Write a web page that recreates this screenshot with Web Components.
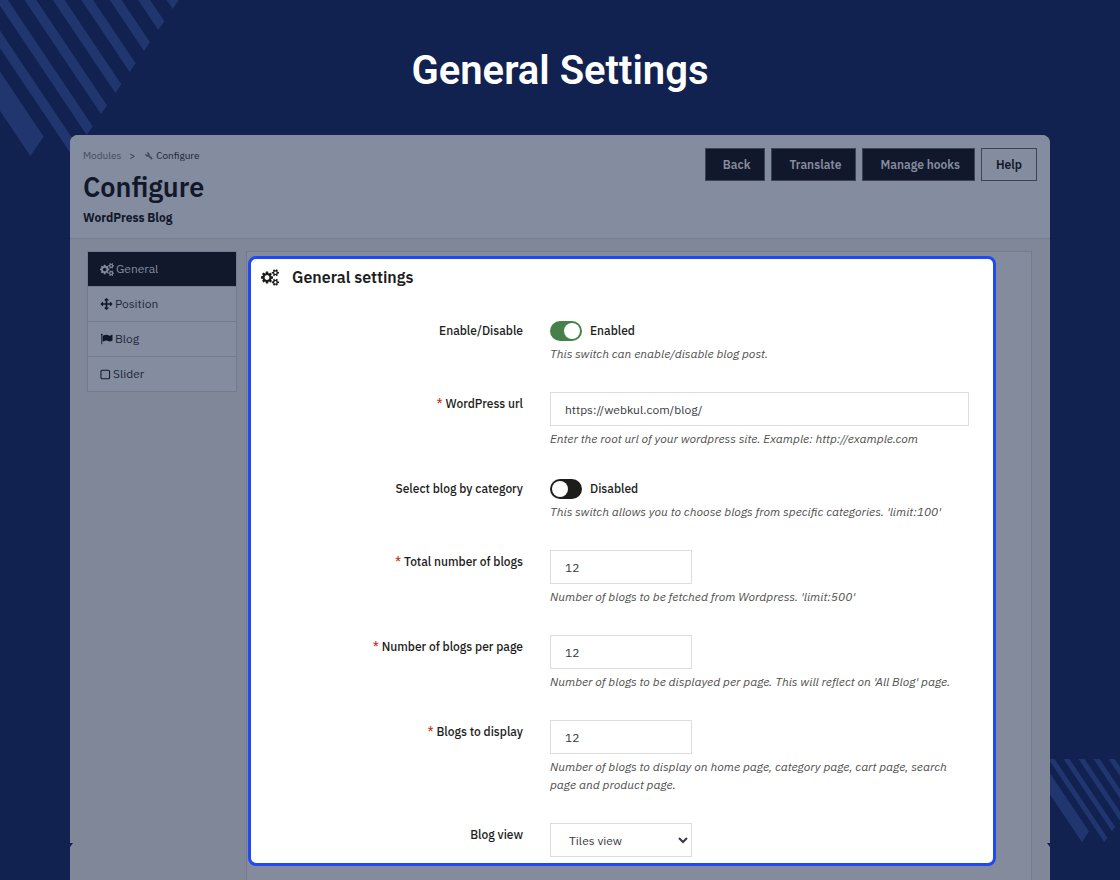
<!DOCTYPE html>
<html lang="en">
<head>
<meta charset="utf-8">
<meta name="viewport" content="width=device-width, initial-scale=1">
<title>General Settings</title>
<style>
  html, body { margin: 0; }
  body {
    background: #112150;
    color: #1d1d1b;
    font-family: "IBM Plex Sans", "Noto Sans", sans-serif;
    font-size: 12px;
    line-height: 18px;
  }
</style>
</head>
<body>
<settings-page>
  <span slot="title">General Settings</span>
  <module-header slot="header" heading="Configure" subtitle="WordPress Blog">
    <header-button>Back</header-button>
    <header-button>Translate</header-button>
    <header-button>Manage hooks</header-button>
    <header-button outline>Help</header-button>
  </module-header>
  <side-nav slot="nav">
    <nav-item icon="cogs" active>General</nav-item>
    <nav-item icon="arrows">Position</nav-item>
    <nav-item icon="flag">Blog</nav-item>
    <nav-item icon="square">Slider</nav-item>
  </side-nav>
  <settings-panel heading="General settings">
    <setting-row type="switch" label="Enable/Disable" checked help="This switch can enable/disable blog post."></setting-row>
    <setting-row type="url" label="WordPress url" required value="https://webkul.com/blog/" help="Enter the root url of your wordpress site. Example: http://example.com"></setting-row>
    <setting-row type="switch" label="Select blog by category" help="This switch allows you to choose blogs from specific categories. 'limit:100'"></setting-row>
    <setting-row type="text" label="Total number of blogs" required value="12" help="Number of blogs to be fetched from Wordpress. 'limit:500'"></setting-row>
    <setting-row type="text" label="Number of blogs per page" required value="12" help="Number of blogs to be displayed per page. This will reflect on 'All Blog' page."></setting-row>
    <setting-row type="text" label="Blogs to display" required value="12" help="Number of blogs to display on home page, category page, cart page, search page and product page."></setting-row>
    <setting-row type="select" label="Blog view" value="Tiles view"></setting-row>
  </settings-panel>
</settings-page>

<script>
const ICONS = {
  cogs: ['0 0 1920 1792', '<path d="M896 896q0-106-75-181t-181-75-181 75-75 181 75 181 181 75 181-75 75-181zm768 512q0-52-38-90t-90-38-90 38-38 90q0 53 37.5 90.5t90.5 37.5 90.5-37.5 37.5-90.5zm0-1024q0-52-38-90t-90-38-90 38-38 90q0 53 37.5 90.5t90.5 37.5 90.5-37.5 37.5-90.5zm-384 421v185q0 10-7 19.5t-16 10.5l-155 24q-11 35-32 76 34 48 90 115 7 11 7 20 0 12-7 19-23 30-82.5 89.5t-78.5 59.5q-11 0-21-7l-115-90q-37 19-77 31-11 108-23 155-7 24-30 24h-186q-11 0-20-7.5t-10-17.5l-23-153q-34-10-75-31l-118 89q-7 7-20 7-11 0-21-8-144-133-144-160 0-9 7-19 10-14 41-53t47-61q-23-44-35-82l-152-24q-10-1-17-9.5t-7-19.5v-185q0-10 7-19.5t16-10.5l155-24q11-35 32-76-34-48-90-115-7-11-7-20 0-12 7-20 22-30 82-89t79-59q11 0 21 7l115 90q34-18 77-32 11-108 23-154 7-24 30-24h186q11 0 20 7.5t10 17.5l23 153q34 10 75 31l118-89q8-7 20-7 11 0 21 8 144 133 144 160 0 8-7 19-12 16-42 54t-45 60q23 48 34 82l152 23q10 2 17 10.5t7 19.5zm640 533v140q0 16-149 31-12 27-30 52 51 113 51 138 0 4-4 7-122 71-124 71-8 0-46-47t-52-68q-20 2-30 2t-30-2q-14 21-52 68t-46 47q-2 0-124-71-4-3-4-7 0-25 51-138-18-25-30-52-149-15-149-31v-140q0-16 149-31 13-29 30-52-51-113-51-138 0-4 4-7 4-2 35-20t59-34 30-16q8 0 46 46.5t52 67.5q20-2 30-2t30 2q51-71 92-112l6-2q4 0 124 70 4 3 4 7 0 25-51 138 17 23 30 52 149 15 149 31zm0-1024v140q0 16-149 31-12 27-30 52 51 113 51 138 0 4-4 7-122 71-124 71-8 0-46-47t-52-68q-20 2-30 2t-30-2q-14 21-52 68t-46 47q-2 0-124-71-4-3-4-7 0-25 51-138-18-25-30-52-149-15-149-31v-140q0-16 149-31 13-29 30-52-51-113-51-138 0-4 4-7 4-2 35-20t59-34 30-16q8 0 46 46.5t52 67.5q20-2 30-2t30 2q51-71 92-112l6-2q4 0 124 70 4 3 4 7 0 25-51 138 17 23 30 52 149 15 149 31z"/>'],
  arrows: ['0 0 1792 1792', '<path d="M1792 896q0 26-19 45l-256 256q-19 19-45 19t-45-19-19-45v-128h-384v384h128q26 0 45 19t19 45-19 45l-256 256q-19 19-45 19t-45-19l-256-256q-19-19-19-45t19-45 45-19h128v-384h-384v128q0 26-19 45t-45 19-45-19l-256-256q-19-19-19-45t19-45l256-256q19-19 45-19t45 19 19 45v128h384v-384h-128q-26 0-45-19t-19-45 19-45l256-256q19-19 45-19t45 19l256 256q19 19 19 45t-19 45-45 19h-128v384h384v-128q0-26 19-45t45-19 45 19l256 256q19 19 19 45z"/>'],
  flag: ['0 0 1792 1792', '<path d="M320 256q0 72-64 110v1266q0 13-9.5 22.5t-22.5 9.5h-64q-13 0-22.5-9.5t-9.5-22.5v-1266q-64-38-64-110 0-53 37.5-90.5t90.5-37.5 90.5 37.5 37.5 90.5zm1472 64v763q0 25-12.5 38.5t-39.5 27.5q-215 116-369 116-61 0-123.5-22t-108.5-48-115.5-48-142.5-22q-192 0-464 146-17 9-33 9-26 0-45-19t-19-45v-742q0-32 31-55 21-14 79-43 236-120 421-120 107 0 200 29t219 88q38 19 88 19 54 0 117.5-21t110-47 88-47 54.5-21q26 0 45 19t19 45z"/>'],
  square: ['0 0 20 24', '<rect x="1.6" y="4" width="16" height="16" rx="2.6" fill="none" stroke="currentColor" stroke-width="1.9"/>'],
  wrench: ['0 0 24 24', '<path fill-rule="evenodd" d="M22.700 19l-9.100-9.100c.9-2.300.4-5-1.500-6.900-2-2-5-2.400-7.400-1.300L9 6 6 9 1.600 4.700C.4 7.100.9 10.100 2.900 12.100c1.900 1.900 4.600 2.400 6.900 1.500l9.100 9.100c.4.4 1 .4 1.400 0l2.300-2.300c.5-.4.5-1.100.1-1.400z"/>']
};
const icon = name => `<svg class="icon ${name}" viewBox="${ICONS[name][0]}" fill="currentColor" aria-hidden="true">${ICONS[name][1]}</svg>`;

class Base extends HTMLElement {
  connectedCallback() {
    if (this.shadowRoot) return;
    const t = document.createElement('template');
    t.innerHTML = `<style>*{box-sizing:border-box}${this.css()}</style>${this.html()}`;
    this.attachShadow({ mode: 'open' }).append(t.content.cloneNode(true));
  }
}

/* One diagonal bar: lower tip, right tip, then both carried up along the slope. */
const bar = (bx, by, rx, ry) => {
  const dx = 400, dy = 596;
  return `<polygon points="${bx},${by} ${rx},${ry} ${rx - dx},${ry - dy} ${bx - dx},${by - dy}"/>`;
};
const bars = (n, x, y, w, h, sx, sy) =>
  Array.from({ length: n }, (_, i) => bar(x + i * sx, y - i * sy, x + i * sx + w, y - i * sy - h)).join('');

customElements.define('settings-page', class extends Base {
  css() { return `
    :host { display: flex; flex-direction: column; position: relative; min-height: 100vh; overflow: hidden; }
    .deco { position: absolute; fill: #21366f; }
    .tl { top: 0; left: 0; width: 200px; height: 170px; }
    .br { bottom: 38px; right: 0; width: 70px; height: 84px; }
    h1 { position: relative; margin: 0; padding: 47px 16px 40px; text-align: center; color: #fff;
         font: 600 40px/48px Roboto, sans-serif; }
    .card { position: relative; flex: 1; display: flex; flex-direction: column; margin: 0 70px;
            background: #7f8799; border-radius: 8px 8px 0 0; }
    .body { flex: 1; display: flex; align-items: stretch; gap: 9px; padding: 12px 18px 0 17px; }
    .main { flex: 1; min-width: 0; padding: 4px 35px 15px 1px; background: #838b9d;
            border: 1px solid #737b8e; border-bottom: 0; }
    .notch { position: absolute; bottom: 34px; width: 3px; height: 4px; fill: #112150; }
    .notch.l { left: 0; }
    .notch.r { right: 0; transform: scaleX(-1); }
    `; }
  html() { return `
    <svg class="deco tl" viewBox="0 0 600 510" aria-hidden="true">${bar(91, 468, 131, 410)}${bars(8, 217, 468, 18, 26, 43, 63)}</svg>
    <svg class="deco br" viewBox="150 54 210 252" aria-hidden="true">${bar(246, 304, 267, 271)}${bars(5, 313, 304, 9, 14, 23, 33)}</svg>
    <h1><slot name="title"></slot></h1>
    <main class="card">
      <slot name="header"></slot>
      <div class="body"><slot name="nav"></slot><div class="main"><slot></slot></div></div>
      <svg class="notch l" viewBox="0 0 3 4" aria-hidden="true"><path d="M0 0h3L0 4z"/></svg>
      <svg class="notch r" viewBox="0 0 3 4" aria-hidden="true"><path d="M0 0h3L0 4z"/></svg>
    </main>`; }
});

customElements.define('module-header', class extends Base {
  css() { return `
    :host { display: flex; justify-content: space-between; align-items: flex-start; padding: 13px 13px 11px;
            background: #848c9f; border-bottom: 1px solid #757d90; border-radius: 8px 8px 0 0; color: #12182b; }
    nav { display: flex; align-items: center; font-size: 10px; line-height: 16px; color: #1b2338; }
    a { color: #414b62; text-decoration: none; }
    .sep { margin: 0 10px 0 8px; }
    .icon { width: 8px; height: 8px; margin-right: 3px; color: #414b62; }
    h2 { margin: 3px 0 2px; font-size: 27px; line-height: 40px; font-weight: 600; }
    p { margin: 0; font-weight: 700; font-size: 12px; line-height: 18px; }
    .actions { display: flex; gap: 6px; }
    `; }
  html() { return `
    <div>
      <nav aria-label="Breadcrumb"><a href="#modules">Modules</a><span class="sep">&gt;</span>${icon('wrench')}<span>Configure</span></nav>
      <h2>${this.getAttribute('heading')}</h2>
      <p>${this.getAttribute('subtitle')}</p>
    </div>
    <div class="actions"><slot></slot></div>`; }
});

customElements.define('header-button', class extends Base {
  css() { return `
    :host { display: block; }
    button { height: 33px; margin: 0; padding: 0 14px 0 17px; border: 1px solid #3b4358; border-radius: 0;
             background: #12182b; color: #858c9f; font: inherit; font-weight: 600; cursor: pointer; }
    :host([outline]) button { padding: 0 14px; background: transparent; color: #12182b; }
    `; }
  html() { return `<button type="button"><slot></slot></button>`; }
});

customElements.define('side-nav', class extends Base {
  css() { return `
    :host { display: block; flex: 0 0 150px; }
    nav { border: 1px solid #737b8e; }
    `; }
  html() { return `<nav aria-label="Sections"><slot></slot></nav>`; }
});

customElements.define('nav-item', class extends Base {
  css() { return `
    :host { display: block; border-top: 1px solid #737b8e; background: #848c9f; }
    :host([active]) { border-top: 0; background: #12182b; }
    a { display: flex; align-items: center; gap: 2px; height: 34px; padding: 0 12px; color: #1f273c; text-decoration: none; }
    :host([active]) a { color: #858c9f; }
    .icon { width: 13px; height: 12px; color: #12182b; }
    .icon.cogs { width: 14px; height: 13px; color: #858c9f; }
    .icon.square { width: 11px; height: 13px; }
    `; }
  html() { return `<a href="#${this.getAttribute('icon')}">${icon(this.getAttribute('icon'))}<span><slot></slot></span></a>`; }
});

customElements.define('settings-panel', class extends Base {
  css() { return `
    :host { display: block; background: #fff; border: 3px solid #1f49f5; border-radius: 8px; }
    h3 { display: flex; align-items: center; gap: 13px; margin: 0; padding: 6px 10px; font-size: 16px; line-height: 24px; font-weight: 600; }
    .icon { width: 18px; height: 17px; }
    form { display: flex; flex-direction: column; gap: 29px; padding: 24px 24px 6px 0; }
    `; }
  html() { return `<h3>${icon('cogs')}${this.getAttribute('heading')}</h3><form><slot></slot></form>`; }
});

customElements.define('setting-row', class extends Base {
  css() { return `
    :host { display: grid; grid-template-columns: 272px minmax(0, 1fr); column-gap: 27px; }
    .label { padding-top: 3px; text-align: right; font-weight: 500; }
    .req { color: #c0392b; }
    .text, select { display: block; width: 142px; height: 34px; margin: 0; padding: 0 14px; border: 1px solid #ddd;
            border-radius: 0; background: #fff; color: #363a41; font: inherit; }
    .text.wide { width: 100%; }
    .switch { display: flex; align-items: center; gap: 8px; padding-top: 2px; font-weight: 500; height: 22px; }
    .switch input { appearance: none; width: 32px; height: 20px; margin: 0; border-radius: 10px; background: #1d1d1b; display: flex; align-items: center; padding: 0 2px; }
    .switch input::before { content: ""; width: 16px; height: 16px; border-radius: 50%; background: #fff; }
    .switch input:checked { background: #46814a; justify-content: flex-end; }
    p { margin: 4px 0 0; font-style: italic; color: #4f4f4d; }
    `; }
  html() {
    const type = this.getAttribute('type'), value = this.getAttribute('value'), help = this.getAttribute('help');
    const on = this.hasAttribute('checked');
    const control = type === 'switch'
      ? `<div class="switch"><input id="c" type="checkbox" role="switch"${on ? ' checked' : ''}><span>${on ? 'Enabled' : 'Disabled'}</span></div>`
      : type === 'select'
      ? `<select id="c"><option>${value}</option></select>`
      : `<input id="c" class="text${type === 'url' ? ' wide' : ''}" type="text" value="${value}">`;
    return `<label class="label" for="c">${this.hasAttribute('required') ? '<span class="req">*</span> ' : ''}${this.getAttribute('label')}</label>
      <div>${control}${help ? `<p>${help}</p>` : ''}</div>`;
  }
});
</script>
</body>
</html>
